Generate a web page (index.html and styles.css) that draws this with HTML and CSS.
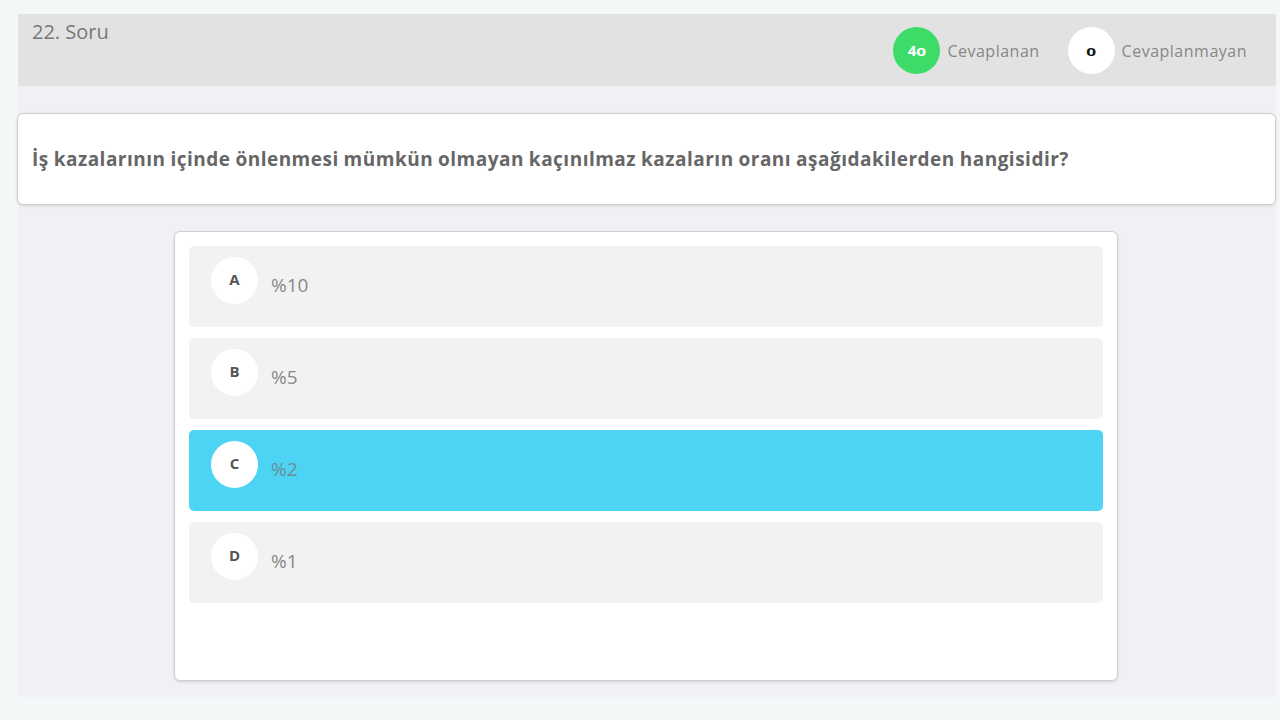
FILE: index.html
```html
<!DOCTYPE html>
<html lang="tr">
<head>
<meta charset="utf-8">
<link rel="stylesheet" href="styles.css">
</head>
<body>
<div class="page">
  <header class="topbar">
    <div class="title">22. Soru</div>
    <div class="stats">
      <div class="stat">
        <span class="badge badge-green">4<span class="os">0</span></span>
        <span class="stat-label">Cevaplanan</span>
      </div>
      <div class="stat">
        <span class="badge badge-white"><span class="os">0</span></span>
        <span class="stat-label">Cevaplanmayan</span>
      </div>
    </div>
  </header>
  <section class="question">
    <p>İş kazalarının içinde önlenmesi mümkün olmayan kaçınılmaz kazaların oranı aşağıdakilerden hangisidir?</p>
  </section>
  <section class="options">
    <div class="option"><span class="letter">A</span><span class="answer">%10</span></div>
    <div class="option"><span class="letter">B</span><span class="answer">%5</span></div>
    <div class="option selected"><span class="letter">C</span><span class="answer">%2</span></div>
    <div class="option"><span class="letter">D</span><span class="answer">%1</span></div>
  </section>
</div>
</body>
</html>
```
FILE: styles.css
```css
* { box-sizing: border-box; }
html, body { margin: 0; padding: 0; }
body {
  background: #f4f7f7;
  font-family: "Open Sans", "DejaVu Sans", sans-serif;
  width: 1280px;
  height: 720px;
  overflow: hidden;
}
.page {
  margin: 14px 4px 0 18px;
  height: 683px;
  background: #f1f1f5;
  display: flex;
  flex-direction: column;
}
.topbar {
  height: 72px;
  background: #e2e2e2;
  display: flex;
  justify-content: space-between;
  align-items: flex-start;
  padding: 0 29px 0 14px;
}
.title {
  color: #777;
  font-size: 20px;
  margin-top: 4px;
}
.stats {
  display: flex;
  align-items: center;
  gap: 28px;
  margin-top: 13px;
}
.stat {
  display: flex;
  align-items: center;
  gap: 7px;
}
.badge {
  width: 47px;
  height: 47px;
  border-radius: 50%;
  display: flex;
  align-items: baseline;
  justify-content: center;
  padding-top: 13px;
  font-weight: 700;
  font-size: 15px;
  line-height: 20px;
}
.os {
  display: inline-block;
  font-size: 15px;
  transform: scale(1.15, 0.72);
  transform-origin: 50% 80%;
  margin-left: 1px;
}
.badge-green { background: #3ddc68; color: #fff; }
.badge-white { background: #fff; color: #111; }
.badge-white .os { margin-left: 0; }
.stat-label {
  color: #888;
  font-size: 16px;
  letter-spacing: 0.5px;
}
.question {
  margin: 27px 0 0 -1px;
  height: 92px;
  background: #fff;
  border: 1px solid #cfcfcf;
  border-radius: 6px;
  box-shadow: 0 1px 3px rgba(0,0,0,0.12);
  display: flex;
  align-items: center;
  padding: 0 14px;
}
.question p {
  margin: 0;
  color: #666;
  font-weight: 700;
  font-size: 19px;
  letter-spacing: 0.49px;
  word-spacing: -0.5px;
}
.options {
  margin: 26px 0 0 156px;
  width: 944px;
  height: 450px;
  background: #fff;
  border: 1px solid #cfcfcf;
  border-radius: 6px;
  box-shadow: 0 1px 3px rgba(0,0,0,0.12);
  padding: 14px 14px 0 14px;
  display: flex;
  flex-direction: column;
  gap: 11px;
}
.option {
  height: 81px;
  background: #f2f2f2;
  border-radius: 5px;
  display: flex;
  align-items: flex-start;
  padding: 11px 22px;
}
.option.selected { background: #4dd3f3; }
.letter {
  width: 47px;
  height: 47px;
  border-radius: 50%;
  background: #fff;
  color: #555;
  font-weight: 700;
  font-size: 15px;
  line-height: 20px;
  padding-bottom: 3px;
  display: flex;
  align-items: center;
  justify-content: center;
  flex-shrink: 0;
}
.answer {
  margin-left: 13px;
  margin-top: 15px;
  color: #888;
  font-size: 19px;
}
.selected .answer { color: #6a8f9a; }
```
